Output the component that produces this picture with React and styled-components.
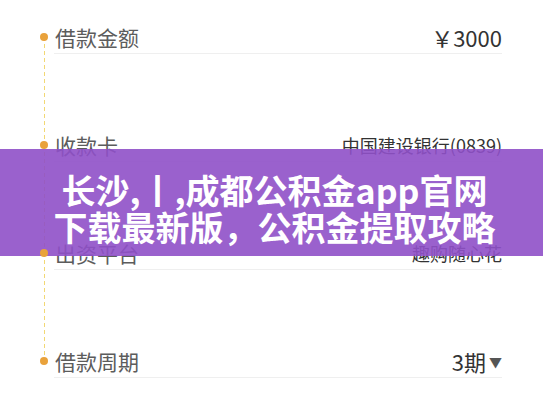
import React from 'react';
import styled, { createGlobalStyle } from 'styled-components';

const GlobalStyle = createGlobalStyle`
    body {
        margin: 0;
        background: #ffffff;
        font-family: "Noto Sans CJK SC", "Noto Sans", sans-serif;
    }
`;

const Page = styled.div`
    position: relative;
    width: 543px;
    height: 408px;
    overflow: hidden;
    background: #ffffff;
`;

const Timeline = styled.ul`
    list-style: none;
    margin: 0;
    padding: 21px 41px 0 34px;
`;

const Item = styled.li`
    display: grid;
    grid-template-columns: 20px 1fr;
    height: 108px;
`;

const Marker = styled.div`
    position: relative;
    height: 32px;
    display: flex;
    align-items: center;
    justify-content: center;

    &::before {
        content: '';
        width: 8px;
        height: 8px;
        border-radius: 50%;
        background: #e9a23b;
        position: relative;
        z-index: 1;
    }

    &::after {
        content: '';
        display: ${({ last }) => (last ? 'none' : 'block')};
        position: absolute;
        left: 9.5px;
        top: 16px;
        width: 1px;
        height: 108px;
        background: repeating-linear-gradient(
            to bottom,
            #f2d874 0,
            #f2d874 4px,
            transparent 4px,
            transparent 7px
        );
    }
`;

const Head = styled.div`
    display: flex;
    align-items: center;
    justify-content: space-between;
    height: 32px;
    padding-left: 1px;
    border-bottom: 1px solid #efefef;
`;

const Label = styled.span`
    font-size: 21px;
    color: #5c5c5c;
    line-height: 1;
`;

const Value = styled.span`
    display: flex;
    align-items: center;
    gap: 3px;
    font-size: ${({ small }) => (small ? '18px' : '22px')};
    color: #333333;
    line-height: 1;
`;

const Caret = styled.span`
    font-size: 13px;
    color: #555555;
`;

const Banner = styled.div`
    position: absolute;
    left: 0;
    right: 0;
    top: 149px;
    height: 107px;
    box-sizing: border-box;
    padding: 22px 0 0 6px;
    background: rgba(143, 80, 200, 0.9);
    color: #ffffff;
    text-align: center;
    font-family: "Noto Sans CJK SC", "Noto Sans", sans-serif;
    font-weight: 700;
    font-size: 34px;
    line-height: 37px;
`;

const rows = [
    { label: '借款金额', value: '￥3000' },
    { label: '收款卡', value: '中国建设银行(0839)', small: true },
    { label: '出资平台', value: '趣购随心花', small: true },
    { label: '借款周期', value: '3期', caret: true },
];

const App = () => (
    <Page>
        <GlobalStyle />
        <Timeline>
            {rows.map((row, i) => (
                <Item key={row.label}>
                    <Marker last={i === rows.length - 1} />
                    <Head>
                        <Label>{row.label}</Label>
                        <Value small={row.small}>
                            {row.value}
                            {row.caret && <Caret>▼</Caret>}
                        </Value>
                    </Head>
                </Item>
            ))}
        </Timeline>
        <Banner>
            长沙,丨,成都公积金app官网
            <br />
            下载最新版，公积金提取攻略
        </Banner>
    </Page>
);

export default App;
